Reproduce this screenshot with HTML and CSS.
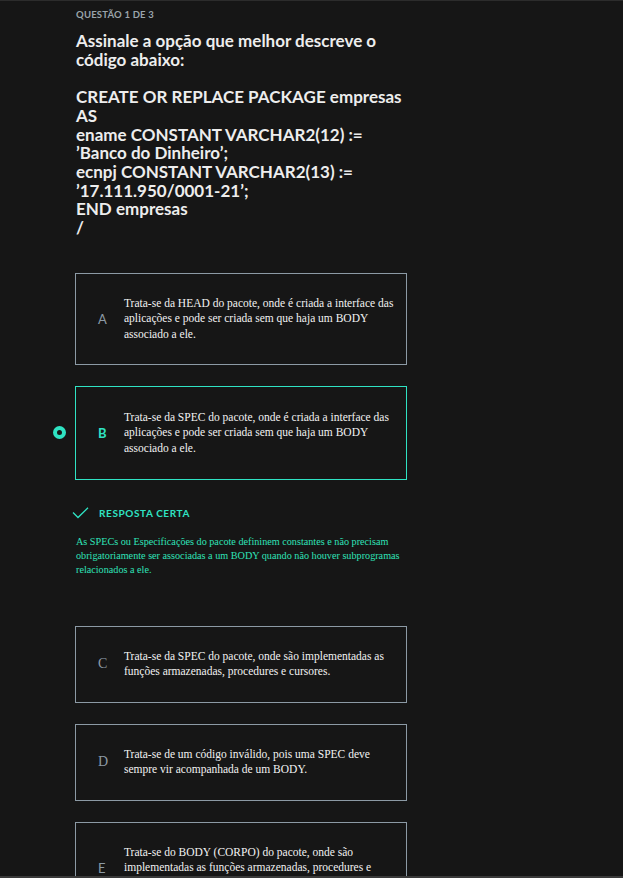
FILE: index.html
```html
<!DOCTYPE html>
<html lang="pt-BR">
<head>
<meta charset="utf-8">
<title>Questão 1 de 3</title>
<link rel="stylesheet" href="styles.css">
</head>
<body>
<div class="frame">
  <main class="question">
    <div class="counter">QUESTÃO 1 DE 3</div>
    <h1 class="prompt">Assinale a opção que melhor descreve o código abaixo:<br><br>CREATE OR REPLACE PACKAGE empresas<br>AS<br>ename CONSTANT VARCHAR2(12) :=<br>’Banco do Dinheiro’;<br>ecnpj CONSTANT VARCHAR2(13) :=<br>’17.111.950/0001-21’;<br>END empresas<br>/</h1>

    <ul class="options">
      <li class="option-row">
        <div class="option">
          <span class="letter">A</span>
          <p class="text">Trata-se da HEAD do pacote, onde é criada a interface das aplicações e pode ser criada sem que haja um BODY associado a ele.</p>
        </div>
      </li>
      <li class="option-row selected">
        <span class="radio"></span>
        <div class="option">
          <span class="letter">B</span>
          <p class="text">Trata-se da SPEC do pacote, onde é criada a interface das aplicações e pode ser criada sem que haja um BODY associado a ele.</p>
        </div>
      </li>
      <li class="feedback">
        <div class="feedback-head">
          <svg class="check" width="17" height="12" viewBox="0 0 17 12"><path d="M1 5.5 L6 10.5 L16 0.8" fill="none" stroke="#2fe3c3" stroke-width="1.3"/></svg>
          <span>RESPOSTA CERTA</span>
        </div>
        <p class="explain">As SPECs ou Especificações do pacote defininem constantes e não precisam obrigatoriamente ser associadas a um BODY quando não houver subprogramas relacionados a ele.</p>
      </li>
      <li class="option-row">
        <div class="option">
          <span class="letter serif">C</span>
          <p class="text">Trata-se da SPEC do pacote, onde são implementadas as funções armazenadas, procedures e cursores.</p>
        </div>
      </li>
      <li class="option-row">
        <div class="option">
          <span class="letter serif">D</span>
          <p class="text">Trata-se de um código inválido, pois uma SPEC deve sempre vir acompanhada de um BODY.</p>
        </div>
      </li>
      <li class="option-row">
        <div class="option">
          <span class="letter">E</span>
          <p class="text">Trata-se do BODY (CORPO) do pacote, onde são implementadas as funções armazenadas, procedures e cursores.</p>
        </div>
      </li>
    </ul>
  </main>
</div>
</body>
</html>
```
FILE: styles.css
```css
html, body {
  margin: 0;
  padding: 0;
  background: #161616;
}
.frame {
  box-sizing: border-box;
  height: 878px;
  overflow: hidden;
  border-top: 1px solid #2c2c2c;
  border-bottom: 2px solid #3a3a3a;
}
.question {
  padding: 8px 0 0 76px;
  width: 332px;
}
.counter {
  font-family: Lato, "Liberation Sans", sans-serif;
  font-weight: 700;
  font-size: 9.5px;
  letter-spacing: 0.2px;
  color: #9aa4ab;
  line-height: 12px;
}
.prompt {
  margin: 11px 0 0;
  font-family: Lato, "Liberation Sans", sans-serif;
  font-weight: 700;
  font-size: 17px;
  line-height: 18.7px;
  color: #ededed;
}
.options {
  list-style: none;
  margin: 35px 0 0;
  padding: 0;
  display: flex;
  flex-direction: column;
  gap: 21px;
}
.option-row {
  position: relative;
  margin-left: -1px;
}
.option {
  box-sizing: border-box;
  width: 332px;
  border: 1px solid #8c9aa5;
  display: flex;
  align-items: center;
  padding: 22px 10px 22px 22px;
}
.letter {
  width: 26px;
  flex: none;
  font-family: Lato, "Liberation Sans", sans-serif;
  font-size: 13px;
  color: #8c9aa5;
}
.letter.serif {
  font-family: "Liberation Serif", serif;
  font-size: 14px;
}
.text {
  margin: 0;
  font-family: "Liberation Serif", serif;
  font-size: 11.5px;
  line-height: 15.5px;
  color: #f2f2f2;
}
.selected .option {
  border-color: #2fe3c3;
  padding-top: 22.5px;
  padding-bottom: 22.5px;
}
.selected .letter {
  color: #2fe3c3;
  font-weight: 700;
}
.radio {
  position: absolute;
  left: -22px;
  top: 50%;
  width: 5px;
  height: 5px;
  margin-top: -7px;
  border: 4px solid #2fe3c3;
  border-radius: 50%;
}
.feedback {
  padding: 6px 0 28px;
}
.feedback-head {
  display: flex;
  align-items: center;
  gap: 10px;
  margin-left: -4px;
  font-family: Lato, "Liberation Sans", sans-serif;
  font-weight: 700;
  font-size: 10px;
  letter-spacing: 0.6px;
  color: #2fe3c3;
}
.explain {
  margin: 16px 0 0;
  font-family: "Liberation Serif", serif;
  font-size: 10.2px;
  line-height: 14px;
  color: #2fe3b9;
}
```
